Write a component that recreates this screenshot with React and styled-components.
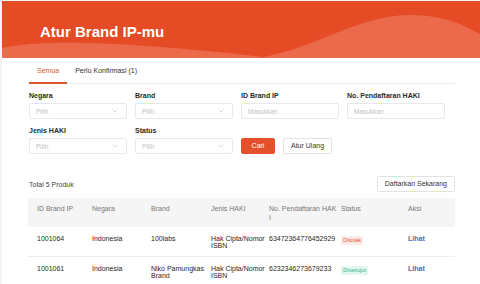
import React from 'react';
import styled, { createGlobalStyle } from 'styled-components';
import { ChevronDown } from 'lucide-react';

const GlobalStyle = createGlobalStyle`
body{
    margin:0;
    background:#f3f3f3;
    font-family:"Liberation Sans", Arial, sans-serif;
}
`;

const filters = [
    { label: 'Negara', type: 'select' },
    { label: 'Brand', type: 'select' },
    { label: 'ID Brand IP', type: 'input' },
    { label: 'No. Pendaftaran HAKI', type: 'input' },
    { label: 'Jenis HAKI', type: 'select' },
    { label: 'Status', type: 'select' },
];

const headers = [['ID Brand IP'], ['Negara'], ['Brand'], ['Jenis HAKI'], ['No. Pendaftaran HAK', 'I'], ['Status'], ['Aksi']];

const rows = [
    { id: '1001064', country: 'Indonesia', brand: ['100labs'], haki: ['Hak Cipta/Nomor', 'ISBN'], reg: '63472364776452929', status: 'Ditolak', tone: 'red' },
    { id: '1001061', country: 'Indonesia', brand: ['Niko Pamungkas', 'Brand'], haki: ['Hak Cipta/Nomor', 'ISBN'], reg: '6232346273679233', status: 'Disetujui', tone: 'green' },
];

const lines = (arr) => arr.map((t) => <Line key={t}>{t}</Line>);

function App() {
    return (
        <Page>
            <GlobalStyle />
            <Banner>
                <Wave viewBox="0 0 480 57" preserveAspectRatio="none">
                    <path d="M0 47 C 45 37, 140 42, 262 56 C 318 46, 358 14, 410 14 C 448 14, 468 27, 480 33 L480 57 L0 57 Z" fill="#ea6a4b" />
                </Wave>
                <Title>Atur Brand IP-mu</Title>
            </Banner>
            <Card>
                <Tabs>
                    <Tab $active>Semua</Tab>
                    <Tab>Perlu Konfirmasi (1)</Tab>
                </Tabs>
                <FilterGrid>
                    {filters.map((f) => (
                        <Field key={f.label}>
                            <Label>{f.label}</Label>
                            {f.type === 'select' ? (
                                <Box>
                                    <span>Pilih</span>
                                    <ChevronDown size={8} color="#b5b5b5" strokeWidth={1.5} />
                                </Box>
                            ) : (
                                <Box>
                                    <span>Masukkan</span>
                                </Box>
                            )}
                        </Field>
                    ))}
                    <Actions>
                        <Button $primary>Cari</Button>
                        <Button>Atur Ulang</Button>
                    </Actions>
                </FilterGrid>
                <Toolbar>
                    <Total>Total 5 Produk</Total>
                    <Button>Daftarkan Sekarang</Button>
                </Toolbar>
                <Table>
                    <HeadRow>
                        {headers.map((h) => (
                            <HeadCell key={h[0]}>{lines(h)}</HeadCell>
                        ))}
                    </HeadRow>
                    {rows.map((r) => (
                        <Row key={r.id}>
                            <Cell>{r.id}</Cell>
                            <Cell>{r.country}</Cell>
                            <Cell>{lines(r.brand)}</Cell>
                            <Cell>{lines(r.haki)}</Cell>
                            <Cell>{r.reg}</Cell>
                            <Cell><Badge $tone={r.tone}>{r.status}</Badge></Cell>
                            <Cell><Link>Lihat</Link></Cell>
                        </Row>
                    ))}
                </Table>
            </Card>
        </Page>
    );
}

const Page = styled.div`
margin:1px 0 0 2px;
`;

const Banner = styled.div`
position:relative;
height:57px;
background:#e54b25;
overflow:hidden;
`;

const Wave = styled.svg`
position:absolute;
left:0;
top:0;
width:100%;
height:100%;
`;

const Title = styled.h1`
position:relative;
margin:0;
padding:22px 0 0 38px;
font-size:15px;
line-height:18px;
font-weight:700;
color:#fff;
`;

const Card = styled.div`
background:#fff;
padding:0 25px 0 26px;
height:227px;
`;

const Tabs = styled.div`
display:flex;
padding-left:1px;
border-bottom:1px solid #ececec;
`;

const Tab = styled.div`
height:24px;
line-height:25px;
padding:0 8px;
font-size:7px;
color:${(p) => (p.$active ? '#e0582f' : '#333')};
border-bottom:2px solid ${(p) => (p.$active ? '#e0582f' : 'transparent')};
margin-bottom:-1px;
`;

const FilterGrid = styled.div`
display:grid;
grid-template-columns:repeat(4, 98px);
column-gap:8px;
row-gap:8px;
margin:8px 0 0 1px;
`;

const Field = styled.div`
display:flex;
flex-direction:column;
gap:3px;
`;

const Label = styled.div`
font-size:7px;
line-height:8px;
font-weight:700;
color:#2a2a2a;
`;

const Box = styled.div`
display:flex;
align-items:center;
justify-content:space-between;
height:14px;
padding:0 7px 0 6px;
border:1px solid #e8e8e8;
border-radius:2px;
font-size:6.5px;
color:#c2c2c2;
`;

const Actions = styled.div`
grid-column:3 / 5;
align-self:end;
display:flex;
gap:8px;
`;

const Button = styled.button`
height:16px;
width:${(p) => (p.$primary ? '34px' : 'auto')};
padding:0 ${(p) => (p.$primary ? '0' : '7px')};
border:1px solid ${(p) => (p.$primary ? '#e5502c' : '#e2e2e2')};
border-radius:2px;
background:${(p) => (p.$primary ? '#e5502c' : '#fff')};
color:${(p) => (p.$primary ? '#fff' : '#333')};
font-family:inherit;
font-size:7px;
line-height:14px;
cursor:pointer;
`;

const Toolbar = styled.div`
display:flex;
align-items:center;
justify-content:space-between;
margin-top:22px;
`;

const Total = styled.div`
font-size:7px;
color:#444;
padding-left:1px;
`;

const Table = styled.div`
margin-top:6px;
`;

const columns = '55px 59px 60px 58px 72px 67px 54px';

const HeadRow = styled.div`
display:grid;
grid-template-columns:${columns};
height:29px;
background:#f5f5f5;
`;

const HeadCell = styled.div`
padding:6px 0 0 9px;
font-size:7px;
line-height:9px;
color:#777;
`;

const Row = styled.div`
display:grid;
grid-template-columns:${columns};
height:29px;
border-bottom:1px solid #eee;
`;

const Cell = styled.div`
padding:9px 0 0 9px;
font-size:7px;
line-height:6.5px;
color:#1f1f1f;
`;

const Line = styled.div`
white-space:nowrap;
`;

const Badge = styled.span`
display:inline-block;
padding:1px 2px;
font-size:6px;
line-height:7px;
border-radius:1px;
color:${(p) => (p.$tone === 'red' ? '#e5553a' : '#3bb58f')};
background:${(p) => (p.$tone === 'red' ? '#fdebe7' : '#e3f7f1')};
`;

const Link = styled.span`
color:#3f6db3;
font-weight:700;
`;

export default App;
